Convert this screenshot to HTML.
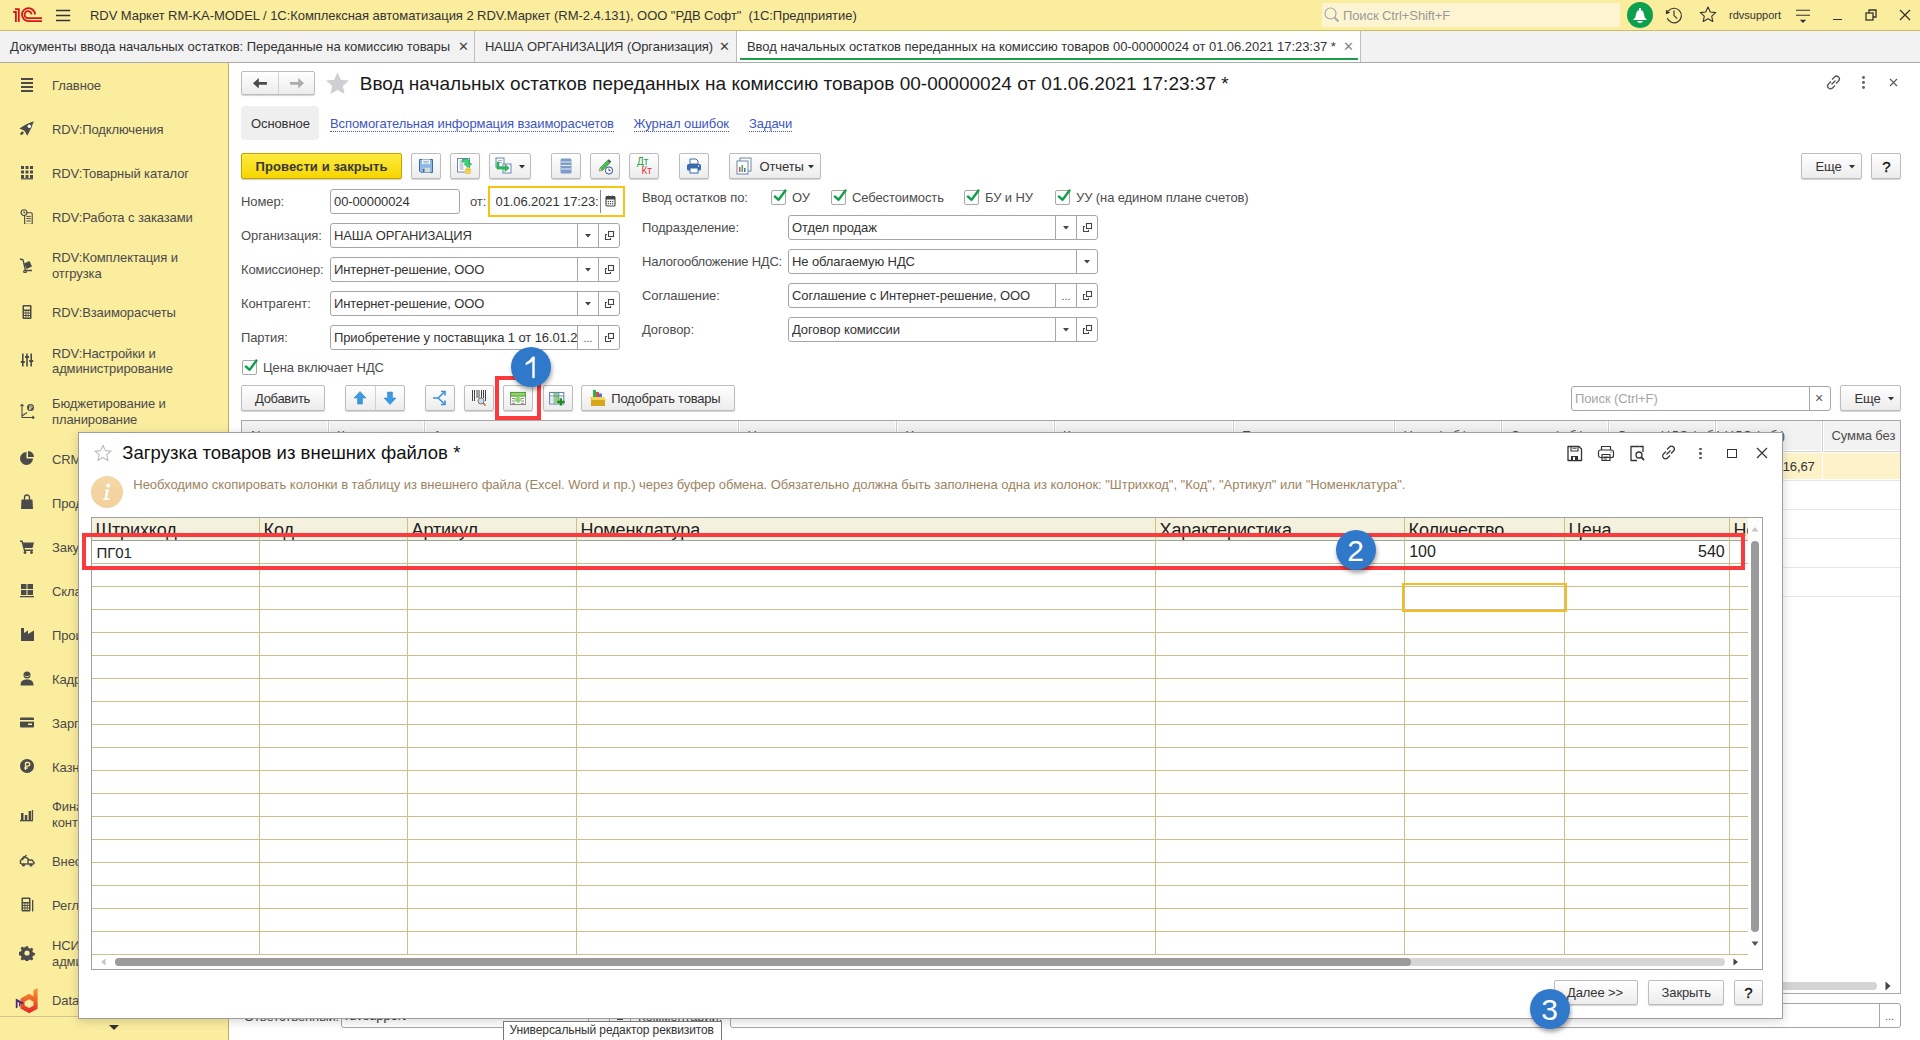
<!DOCTYPE html>
<html><head><meta charset="utf-8">
<style>
*{box-sizing:border-box;margin:0;padding:0}
html,body{width:1920px;height:1040px;overflow:hidden;background:#fff;font-family:"Liberation Sans",sans-serif;font-size:13px;color:#333}
.a{position:absolute}
.tx{position:absolute;white-space:nowrap;line-height:1;letter-spacing:-0.1px}
#top{left:0;top:0;width:1920px;height:31px;background:#FBED9E;border-bottom:1px solid #CDBB6A}
#tabs{left:0;top:31px;width:1920px;height:32px;background:#F2F2F2;border-bottom:1px solid #A9A9A9}
#side{left:0;top:63px;width:229px;height:977px;background:#FBED9E;border-right:1px solid #BFAF62}
.si{position:absolute;left:52px;font-size:13px;color:#4D4D4D;line-height:16px}
.ic{position:absolute}
.btn{position:absolute;border:1px solid #BDBDBD;border-radius:2px;background:linear-gradient(#FFFFFF,#ECECEC);box-shadow:0 1px 1px rgba(0,0,0,.18)}
.inp{position:absolute;border:1px solid #A6A6A6;border-radius:3px;background:#fff;height:25px}
.lbl{position:absolute;color:#4D4D4D;font-size:13px;white-space:nowrap;line-height:1}
.val{position:absolute;color:#333;font-size:13px;white-space:nowrap;line-height:1}
.sep{position:absolute;top:0;bottom:0;width:1px;background:#D0D0D0}
.link{position:absolute;color:#3E62B8;font-size:13px;white-space:nowrap;line-height:1;border-bottom:1px dotted #3E62B8;padding-bottom:1px}
.cb{position:absolute;width:15px;height:15px;border:1px solid #A8A8A8;border-radius:2px;background:#fff}
.dd{position:absolute;width:0;height:0;border-left:4px solid transparent;border-right:4px solid transparent;border-top:4px solid #444}
</style></head><body>
<!-- TOP BAR -->
<div id="top" class="a">
  <svg class="ic" style="left:0;top:0" width="48" height="31" viewBox="0 0 48 31"><g fill="none" stroke="#D7141A" stroke-width="1.8"><path d="M13.2 12 H15.9 V22"/><path d="M15 9.1 H18.8 V22"/><path d="M35 14.5 A6.5 6.5 0 1 0 28 21.1 H42"/><path d="M31.6 14.5 A3.5 3.5 0 1 0 28 18.1 H42"/></g></svg>
  <svg class="ic" style="left:0;top:0" width="80" height="31" viewBox="0 0 80 31"><g stroke="#333" stroke-width="1.3"><path d="M56 10.5H70.2M56 15.5H70.2M56 20.5H70.2"/></g></svg>
  <div class="tx" style="left:90px;top:9px;font-size:13px;color:#333;letter-spacing:-0.053px">RDV Маркет RM-KA-MODEL / 1С:Комплексная автоматизация 2 RDV.Маркет (RM-2.4.131), ООО "РДВ Софт"&nbsp; (1С:Предприятие)</div>
  <div class="a" style="left:1322px;top:3px;width:298px;height:24px;background:#FDF5D2;border-radius:2px"></div>
  <svg class="ic" style="left:1324px;top:7px" width="16" height="16" viewBox="0 0 16 16"><circle cx="6.5" cy="6.5" r="5.5" fill="none" stroke="#A8A8A8" stroke-width="1.2"/><path d="M10.5 10.5 L14.5 14.5" stroke="#A8A8A8" stroke-width="2"/></svg>
  <div class="tx" style="left:1343px;top:9px;font-size:13px;color:#9A9A9A">Поиск Ctrl+Shift+F</div>
  <div class="a" style="left:1627px;top:2px;width:26px;height:26px;border-radius:13px;background:#0BA04E"></div>
  <svg class="ic" style="left:1620px;top:0" width="40" height="31" viewBox="1620 0 40 31"><path d="M1639 7.9h2v2.1q2.4.5 2.8 3.6l.8 3.4q.5 1.6 2.6 2.9H1632.8q2.1-1.3 2.6-2.9l.8-3.4q.4-3.1 2.8-3.6z" fill="#fff"/><path d="M1637 21.1H1643Q1642 23.1 1640 23.1Q1638 23.1 1637 21.1z" fill="#fff"/></svg>
  <svg class="ic" style="left:1660px;top:0" width="30" height="31" viewBox="1660 0 30 31"><g fill="none" stroke="#333" stroke-width="1.15"><path d="M1668.2 11.2 A7.3 7.3 0 1 1 1667.3 18.2"/><path d="M1674 10.6 V15.6 L1677.2 18.7"/></g><path d="M1666 9.8 L1670.2 12.8 L1665.8 14.2z" fill="#333"/></svg>
  <svg class="ic" style="left:1699px;top:6px" width="18" height="18" viewBox="0 0 18 18"><path d="M9 1l2.3 5 5.4.6-4 3.6 1.1 5.3L9 12.8l-4.8 2.7 1.1-5.3-4-3.6 5.4-.6z" fill="none" stroke="#333" stroke-width="1.1" stroke-linejoin="round"/></svg>
  <div class="tx" style="left:1729px;top:10px;font-size:11px;color:#333;letter-spacing:0">rdvsupport</div>
  <svg class="ic" style="left:1790px;top:0" width="26" height="31" viewBox="1790 0 26 31"><g stroke="#333" stroke-width="1.1"><path d="M1796 10.3H1810M1796 15.3H1810"/></g><path d="M1799.8 19.8H1806.2L1803 23z" fill="#333"/></svg>
  <div class="a" style="left:1833px;top:19px;width:9px;height:1px;background:#333"></div>
  <svg class="ic" style="left:1865px;top:9px" width="12" height="12" viewBox="0 0 12 12"><g fill="none" stroke="#333" stroke-width="1.3"><rect x="1" y="4" width="7" height="7"/><path d="M4 4V1H11V8H8"/></g></svg>
  <svg class="ic" style="left:1899px;top:9px" width="12" height="12" viewBox="0 0 12 12"><path d="M1 1L11 11M11 1L1 11" stroke="#333" stroke-width="1.3"/></svg>
</div>
<!-- TABS -->
<div id="tabs" class="a">
  <div class="tx" style="left:10px;top:9px;color:#333;letter-spacing:-0.046px">Документы ввода начальных остатков: Переданные на комиссию товары</div>
  <div class="tx" style="left:458px;top:9px;color:#444;font-size:13px">✕</div>
  <div class="a" style="left:474px;top:0;width:1px;height:31px;background:#BDBDBD"></div>
  <div class="tx" style="left:485px;top:9px;color:#333;letter-spacing:-0.07px">НАША ОРГАНИЗАЦИЯ (Организация)</div>
  <div class="tx" style="left:719px;top:9px;color:#444">✕</div>
  <div class="a" style="left:736px;top:0;width:1px;height:31px;background:#BDBDBD"></div>
  <div class="a" style="left:737px;top:0;width:624px;height:31px;background:#fff"></div>
  <div class="tx" style="left:747px;top:9px;color:#333;letter-spacing:-0.05px">Ввод начальных остатков переданных на комиссию товаров 00-00000024 от 01.06.2021 17:23:37 *</div>
  <div class="tx" style="left:1343px;top:9px;color:#888">✕</div>
  <div class="a" style="left:740px;top:27px;width:618px;height:2px;background:#1E9E4A"></div>
  <div class="a" style="left:1360px;top:0;width:1px;height:31px;background:#BDBDBD"></div>
</div>

<!-- SIDEBAR -->
<div id="side" class="a"></div>
<div class="tx" style="left:52px;top:79.0px;color:#4A4A4A">Главное</div>
<svg class="ic" style="left:19px;top:76px" width="16" height="16" viewBox="0 0 16 16"><rect x="2" y="2" width="12" height="2" fill="#4A4A4A"/><rect x="2" y="6" width="12" height="2" fill="#4A4A4A"/><rect x="2" y="10" width="12" height="2" fill="#4A4A4A"/><rect x="2" y="14" width="12" height="2" fill="#4A4A4A"/></svg>
<div class="tx" style="left:52px;top:123.0px;color:#4A4A4A">RDV:Подключения</div>
<svg class="ic" style="left:19px;top:120px" width="16" height="16" viewBox="0 0 16 16"><path d="M14.8 1.2 Q8.5 3.2 0.4 8.4 L4.6 10.2 L5.9 11.6 L8.3 15.7 Q12.8 8 14.8 1.2z" fill="#4A4A4A"/><circle cx="10.3" cy="6.3" r="1.7" fill="#fff"/><path d="M3.2 11.2 L1.2 13.6 L1.8 15.2 L3.6 14.6 L5 12.6z" fill="#4A4A4A"/></svg>
<div class="tx" style="left:52px;top:166.5px;color:#4A4A4A">RDV:Товарный каталог</div>
<svg class="ic" style="left:19px;top:164px" width="16" height="16" viewBox="0 0 16 16"><g fill="#4A4A4A"><rect x="2" y="2" width="3" height="3"/><rect x="6.5" y="2" width="3" height="3"/><rect x="11" y="2" width="3" height="3"/><rect x="2" y="6.5" width="3" height="3"/><rect x="6.5" y="6.5" width="3" height="3"/><rect x="11" y="6.5" width="3" height="3"/><rect x="2" y="11" width="3" height="3"/><rect x="6.5" y="11" width="3" height="3"/><rect x="11" y="11" width="3" height="3"/><rect x="2" y="14.2" width="12" height="1.2"/></g></svg>
<div class="tx" style="left:52px;top:211.0px;color:#4A4A4A">RDV:Работа с заказами</div>
<svg class="ic" style="left:19px;top:208px" width="16" height="16" viewBox="0 0 16 16"><g fill="none" stroke="#4A4A4A" stroke-width="1.1"><circle cx="5" cy="4.6" r="2.9"/><path d="M5 3.3V4.8H6.2"/><path d="M7.9 4.7H12.2Q13.2 4.7 13.2 5.7V15.2Q13.2 16.2 12.2 16.2H6.6Q5.6 16.2 5.6 15.2V7.5"/></g><path d="M7.3 8.4H11.8M7.3 10.6H11.8M7.3 13H11.8" stroke="#4A4A4A" stroke-width="1"/></svg>
<div class="tx" style="left:52px;top:251.0px;color:#4A4A4A">RDV:Комплектация и</div>
<div class="tx" style="left:52px;top:267.0px;color:#4A4A4A">отгрузка</div>
<svg class="ic" style="left:19px;top:257px" width="16" height="16" viewBox="0 0 16 16"><g fill="none" stroke="#4A4A4A" stroke-width="1.3"><path d="M1 2L4 2.8 6.5 13.5H13"/><circle cx="6" cy="14.5" r="1.2"/></g><rect x="6" y="5" width="6" height="6" transform="rotate(-25 9 8)" fill="#4A4A4A"/></svg>
<div class="tx" style="left:52px;top:306.0px;color:#4A4A4A">RDV:Взаиморасчеты</div>
<svg class="ic" style="left:19px;top:304px" width="16" height="16" viewBox="0 0 16 16"><rect x="3.5" y="1" width="9" height="14" rx="1" fill="#4A4A4A"/><rect x="5" y="2.5" width="6" height="3" fill="#FBED9E"/><g fill="#FBED9E"><rect x="5" y="7" width="1.5" height="1.5"/><rect x="7.3" y="7" width="1.5" height="1.5"/><rect x="9.5" y="7" width="1.5" height="1.5"/><rect x="5" y="9.5" width="1.5" height="1.5"/><rect x="7.3" y="9.5" width="1.5" height="1.5"/><rect x="9.5" y="9.5" width="1.5" height="1.5"/><rect x="5" y="12" width="1.5" height="1.5"/><rect x="7.3" y="12" width="1.5" height="1.5"/><rect x="9.5" y="12" width="1.5" height="1.5"/></g></svg>
<div class="tx" style="left:52px;top:346.5px;color:#4A4A4A">RDV:Настройки и</div>
<div class="tx" style="left:52px;top:362.0px;color:#4A4A4A">администрирование</div>
<svg class="ic" style="left:19px;top:352px" width="16" height="16" viewBox="0 0 16 16"><g fill="#4A4A4A"><rect x="3" y="1.5" width="1.6" height="13"/><rect x="7.2" y="1.5" width="1.6" height="13"/><rect x="11.4" y="1.5" width="1.6" height="13"/><rect x="1.8" y="9" width="4" height="2"/><rect x="6" y="4" width="4" height="2"/><rect x="10.2" y="8" width="4" height="2"/></g></svg>
<div class="tx" style="left:52px;top:397.0px;color:#4A4A4A">Бюджетирование и</div>
<div class="tx" style="left:52px;top:413.0px;color:#4A4A4A">планирование</div>
<svg class="ic" style="left:19px;top:403px" width="16" height="16" viewBox="0 0 16 16"><g fill="none" stroke="#4A4A4A" stroke-width="1.1"><path d="M3 1.5V14.5H15"/><path d="M1.5 3L3 1.5 4.5 3M13.5 13L15 14.5 13.5 16"/><path d="M3 13L8 9.5"/></g><circle cx="11.5" cy="4.5" r="3.5" fill="#4A4A4A"/><path d="M10.8 2.8h1.5a1 1 0 0 1 0 2h-1.5M10.8 2.8V7M10 5.8h2.2" stroke="#FBED9E" stroke-width=".9" fill="none"/></svg>
<div class="tx" style="left:52px;top:452.5px;color:#4A4A4A">CRM и маркетинг</div>
<svg class="ic" style="left:19px;top:450px" width="16" height="16" viewBox="0 0 16 16"><path d="M7.5 2A6.5 6.5 0 1 0 14 8.5H7.5z" fill="#4A4A4A"/><path d="M9 1A6 6 0 0 1 15 7H9z" fill="#4A4A4A"/></svg>
<div class="tx" style="left:52px;top:496.5px;color:#4A4A4A">Продажи</div>
<svg class="ic" style="left:19px;top:494px" width="16" height="16" viewBox="0 0 16 16"><path d="M2.5 5.5H13.5L14 15H2z" fill="#4A4A4A"/><path d="M5.5 7V3.5A2.5 2.5 0 0 1 10.5 3.5V7" fill="none" stroke="#4A4A4A" stroke-width="1.3"/></svg>
<div class="tx" style="left:52px;top:540.5px;color:#4A4A4A">Закупки</div>
<svg class="ic" style="left:19px;top:538px" width="16" height="16" viewBox="0 0 16 16"><g fill="#4A4A4A"><path d="M1 2.5H3.5L4.2 4.5H15L13.5 10H5.5L6 11.5H14V13H5L2.5 4H1z"/><circle cx="6" cy="14.5" r="1.4"/><circle cx="12.5" cy="14.5" r="1.4"/></g></svg>
<div class="tx" style="left:52px;top:584.5px;color:#4A4A4A">Склад и доставка</div>
<svg class="ic" style="left:19px;top:582px" width="16" height="16" viewBox="0 0 16 16"><g fill="#4A4A4A"><rect x="2" y="2" width="5.5" height="5"/><rect x="8.5" y="2" width="5.5" height="5"/><rect x="2" y="8" width="5.5" height="5"/><rect x="8.5" y="8" width="5.5" height="5"/><rect x="1" y="14" width="14" height="1.3"/></g></svg>
<div class="tx" style="left:52px;top:628.5px;color:#4A4A4A">Производство</div>
<svg class="ic" style="left:19px;top:626px" width="16" height="16" viewBox="0 0 16 16"><path d="M2 15V2H5V7L9 4.5V8L15 4.5V15z" fill="#4A4A4A"/></svg>
<div class="tx" style="left:52px;top:672.5px;color:#4A4A4A">Кадры</div>
<svg class="ic" style="left:19px;top:670px" width="16" height="16" viewBox="0 0 16 16"><circle cx="8" cy="5" r="3.5" fill="#4A4A4A"/><path d="M1.5 15.5C1.5 11 4 9.5 8 9.5S14.5 11 14.5 15.5z" fill="#4A4A4A"/><path d="M5.5 5.5c1 1.5 4 1.5 5 0" stroke="#FBED9E" stroke-width=".8" fill="none"/></svg>
<div class="tx" style="left:52px;top:716.5px;color:#4A4A4A">Зарплата</div>
<svg class="ic" style="left:19px;top:714px" width="16" height="16" viewBox="0 0 16 16"><rect x="1" y="3.5" width="14" height="10" rx="1" fill="#4A4A4A"/><rect x="1" y="6" width="14" height="1.6" fill="#FBED9E"/><rect x="9" y="9.5" width="4" height="1.5" fill="#FBED9E"/></svg>
<div class="tx" style="left:52px;top:760.5px;color:#4A4A4A">Казначейство</div>
<svg class="ic" style="left:19px;top:758px" width="16" height="16" viewBox="0 0 16 16"><circle cx="8" cy="8" r="7" fill="#4A4A4A"/><path d="M6.5 4.5h2.5a1.8 1.8 0 0 1 0 3.6H6.5M6.5 4.5V12M5.2 10h3.5" stroke="#FBED9E" stroke-width="1.3" fill="none"/></svg>
<div class="tx" style="left:52px;top:800.0px;color:#4A4A4A">Финансовый результат и</div>
<div class="tx" style="left:52px;top:815.5px;color:#4A4A4A">контроллинг</div>
<svg class="ic" style="left:19px;top:806px" width="16" height="16" viewBox="0 0 16 16"><g fill="#4A4A4A"><rect x="2" y="7" width="2.5" height="7"/><rect x="5.8" y="9" width="2.5" height="5"/><rect x="9.6" y="5" width="2.5" height="9"/><rect x="1" y="14" width="13" height="1.3"/><rect x="12.8" y="4" width="1.3" height="10"/></g></svg>
<div class="tx" style="left:52px;top:855.0px;color:#4A4A4A">Внеоборотные активы</div>
<svg class="ic" style="left:19px;top:852px" width="16" height="16" viewBox="0 0 16 16"><g fill="none" stroke="#4A4A4A" stroke-width="1.4"><path d="M1.5 12V8.5L5 4.5 9 6.5V12"/><path d="M9 8H13L15 10.5V12"/><path d="M2 12H15"/></g><circle cx="4.5" cy="13" r="1.6" fill="#4A4A4A"/><circle cx="12" cy="13" r="1.6" fill="#4A4A4A"/><path d="M3 8L7.5 3" stroke="#4A4A4A" stroke-width="1.2"/></svg>
<div class="tx" style="left:52px;top:899.0px;color:#4A4A4A">Регламентированный учет</div>
<svg class="ic" style="left:19px;top:896px" width="16" height="16" viewBox="0 0 16 16"><rect x="2.5" y="1.5" width="9" height="14" rx="1" fill="#4A4A4A"/><rect x="4" y="3" width="6" height="3" fill="#FBED9E"/><g fill="#FBED9E"><rect x="4" y="7.5" width="1.5" height="1.4"/><rect x="6.3" y="7.5" width="1.5" height="1.4"/><rect x="8.5" y="7.5" width="1.5" height="1.4"/><rect x="4" y="10" width="1.5" height="1.4"/><rect x="6.3" y="10" width="1.5" height="1.4"/><rect x="8.5" y="10" width="1.5" height="1.4"/><rect x="4" y="12.5" width="1.5" height="1.4"/><rect x="6.3" y="12.5" width="1.5" height="1.4"/><rect x="8.5" y="12.5" width="1.5" height="1.4"/></g><rect x="13" y="4" width="1.3" height="11.5" fill="#4A4A4A"/></svg>
<div class="tx" style="left:52px;top:939.0px;color:#4A4A4A">НСИ и</div>
<div class="tx" style="left:52px;top:954.5px;color:#4A4A4A">администрирование</div>
<svg class="ic" style="left:19px;top:945px" width="16" height="16" viewBox="0 0 16 16"><path d="M6.8 1h2.4l.4 2 1.5.7 1.8-1.1 1.7 1.7-1.1 1.8.7 1.5 2 .4v2.4l-2 .4-.7 1.5 1.1 1.8-1.7 1.7-1.8-1.1-1.5.7-.4 2H6.8l-.4-2-1.5-.7-1.8 1.1-1.7-1.7 1.1-1.8-.7-1.5-2-.4V6.8l2-.4.7-1.5-1.1-1.8 1.7-1.7 1.8 1.1 1.5-.7z" fill="#4A4A4A" transform="translate(.2 .2) scale(.97)"/><circle cx="8" cy="8" r="2.6" fill="#FBED9E"/></svg>
<div class="tx" style="left:52px;top:994.0px;color:#4A4A4A">Data</div>
<svg class="ic" style="left:14px;top:986px" width="26" height="30" viewBox="14 986 26 30"><defs><linearGradient id="dg" x1="0" y1="0" x2="0" y2="1"><stop offset="0" stop-color="#F79A2A"/><stop offset="1" stop-color="#E2262A"/></linearGradient></defs><path fill-rule="evenodd" fill="url(#dg)" d="M20.5 998.5 L29.2 993.8 L33.4 996.2 V990.3 L37.6 988 V1008.8 L29.2 1013.2 L20.5 1008.5z M29.2 999.3 L24.6 1001.8 V1005.6 L29.2 1008.1 L33.5 1005.6 V1001.8z"/><path d="M15.8 998.6 L23.2 1002.4 V1004.6 L20.3 1003.2 V1006.2 L19 1006.6 V1002.6 L17.6 1001.9 V1007.6 L15.8 1008.4z" fill="#4B2A7A"/></svg>
<div class="a" style="left:0;top:1016px;width:228px;height:1px;background:#CFC48C"></div>
<div class="dd" style="left:109px;top:1025px;border-left-width:5px;border-right-width:5px;border-top-width:5px;border-top-color:#333"></div>
<!-- MAIN -->
<div class="btn" style="left:241px;top:71px;width:74px;height:24px;"></div>
<div class="a" style="left:278px;top:72px;width:1px;height:22px;background:#D0D0D0"></div>
<svg class="ic" style="left:252px;top:76px" width="16" height="14" viewBox="0 0 16 14"><path d="M1 7.3 L6.8 2 V5.9 H14.9 V8.7 H6.8 V12.6z" fill="#4A4A4A"/></svg>
<svg class="ic" style="left:289px;top:76px" width="16" height="14" viewBox="0 0 16 14"><path d="M15 7.3 L9.2 2 V5.9 H1.1 V8.7 H9.2 V12.6z" fill="#ABABAB"/></svg>
<svg class="ic" style="left:325px;top:71px" width="25" height="25" viewBox="0 0 25 25"><path d="M12.50 1.30 L15.79 8.77 L23.91 9.59 L17.83 15.03 L19.55 23.01 L12.50 18.90 L5.45 23.01 L7.17 15.03 L1.09 9.59 L9.21 8.77z" fill="#CDCFD2"/></svg>
<div class="tx" style="left:359.7px;top:73.92px;font-size:19px;color:#1A1A1A;letter-spacing:0.020px;">Ввод начальных остатков переданных на комиссию товаров 00-00000024 от 01.06.2021 17:23:37 *</div>
<svg class="ic" style="left:1825px;top:74px" width="17" height="17" viewBox="0 0 17 17"><g fill="none" stroke="#555" stroke-width="1.3"><path d="M7 5.5 L9.5 3 a2.8 2.8 0 0 1 4 4 L11 9.5"/><path d="M6 7.5 L3.5 10 a2.8 2.8 0 0 0 4 4 L10 11.5"/><path d="M6.5 10.5 L10.5 6.5"/></g></svg>
<div class="a" style="left:1861.8px;top:76.1px;width:2.8px;height:2.8px;border-radius:50%;background:#666"></div>
<div class="a" style="left:1861.8px;top:81.1px;width:2.8px;height:2.8px;border-radius:50%;background:#666"></div>
<div class="a" style="left:1861.8px;top:86.1px;width:2.8px;height:2.8px;border-radius:50%;background:#666"></div>
<svg class="ic" style="left:1889px;top:78px" width="9" height="9" viewBox="0 0 9 9"><path d="M1 1L8 8M8 1L1 8" stroke="#555" stroke-width="1.1"/></svg>
<div class="a" style="left:241px;top:106px;width:78px;height:34px;background:#EFEFEF;border-radius:4px"></div>
<div class="tx" style="left:251px;top:117.00px;font-size:13px;color:#333;">Основное</div>
<div class="tx" style="left:330px;top:116.50px;font-size:13px;color:#3C55C0;letter-spacing:-0.096px;border-bottom:1px dotted #3C55C0;padding-bottom:0;height:15px">Вспомогательная информация взаиморасчетов</div>
<div class="tx" style="left:633.5px;top:116.50px;font-size:13px;color:#3C55C0;letter-spacing:-0.065px;border-bottom:1px dotted #3C55C0;padding-bottom:0;height:15px">Журнал ошибок</div>
<div class="tx" style="left:749px;top:116.50px;font-size:13px;color:#3C55C0;letter-spacing:-0.076px;border-bottom:1px dotted #3C55C0;padding-bottom:0;height:15px">Задачи</div>
<div class="a" style="left:241px;top:153px;width:161px;height:26px;border:1px solid #C4A500;border-radius:2px;background:linear-gradient(#FFEB40,#F6D600);box-shadow:0 1px 1px rgba(0,0,0,.2)"></div>
<div class="tx" style="left:255.5px;top:159.70px;font-size:13px;color:#383838;letter-spacing:0.095px;font-weight:bold">Провести и закрыть</div>
<div class="btn" style="left:411px;top:153px;width:30px;height:26px;"></div>
<div class="btn" style="left:450px;top:153px;width:30px;height:26px;"></div>
<div class="btn" style="left:489px;top:153px;width:42px;height:26px;"></div>
<div class="btn" style="left:551px;top:153px;width:30px;height:26px;"></div>
<div class="btn" style="left:590px;top:153px;width:30px;height:26px;"></div>
<div class="btn" style="left:629px;top:153px;width:30px;height:26px;"></div>
<div class="btn" style="left:679px;top:153px;width:30px;height:26px;"></div>
<div class="btn" style="left:729px;top:153px;width:92px;height:26px;"></div>
<div class="btn" style="left:1801px;top:153px;width:61px;height:26px;"></div>
<div class="btn" style="left:1871px;top:153px;width:30px;height:26px;"></div>
<svg class="ic" style="left:418px;top:158px" width="16" height="16" viewBox="0 0 16 16"><path d="M1.5 1.5H14.5V14.5H3L1.5 13z" fill="#8CB6E8" stroke="#3C69AC" stroke-width="1"/><rect x="4" y="1.5" width="8" height="4.6" fill="#fff"/><path d="M5.2 3.3H10.8M5.2 4.9H10.8" stroke="#7098CA" stroke-width=".8"/><rect x="3.8" y="9.8" width="8.4" height="4.7" fill="#D3DBD8"/><rect x="4.6" y="10.6" width="1.9" height="3.6" fill="#3C69AC"/></svg>
<svg class="ic" style="left:456px;top:157px" width="18" height="19" viewBox="0 0 18 19"><rect x="1.5" y="1.5" width="12" height="13.5" fill="#fff" stroke="#7088A8" stroke-width="1"/><path d="M3.5 4H7M3.5 6H7M3.5 8H7.5M3.5 10H7.5M3.5 12H7.5" stroke="#8A9AB0" stroke-width=".9"/><path d="M6.5 2.2H10.5Q13.2 2.2 13.2 5V6.8H15.6L11.9 10.6 8.2 6.8H10.2V5.6Q10.2 5 9.6 5H6.5z" fill="#2DE07A" stroke="#13A04A" stroke-width=".8"/><ellipse cx="12" cy="12" rx="2.9" ry="1.3" fill="#F4DA5A"/><path d="M9.1 12V16.2Q12 18 14.9 16.2V12" fill="#E8C02A"/><path d="M9.3 13.6Q12 15 14.7 13.6M9.3 15.2Q12 16.6 14.7 15.2" stroke="#F8E890" stroke-width=".8" fill="none"/></svg>
<svg class="ic" style="left:495px;top:157px" width="19" height="18" viewBox="0 0 19 18"><rect x="1" y="1" width="8" height="9" fill="#fff" stroke="#6A85B0"/><rect x="8" y="7" width="8" height="9" fill="#fff" stroke="#6A85B0"/><path d="M3 3.5H7M3 5.5H7M10 10H14M10 12H14" stroke="#8FA3C2" stroke-width=".8"/><path d="M4 5 V10 H10 V7.5 L14 11 10 14.5 V12 H2 V5z" fill="#2CC35C" stroke="#169A46" stroke-width=".6"/></svg>
<svg class="ic" style="left:518.00px;top:164.30px" width="8.00" height="5.40"><path d="M1 1H7.00L4.00 4.40z" fill="#333"/></svg>
<svg class="ic" style="left:560px;top:158px" width="12" height="16" viewBox="0 0 12 16"><rect x=".5" y=".5" width="11" height="15" rx="1.5" fill="#7E9CC8"/><path d="M1 4H11M1 7.5H11M1 11H11" stroke="#E8EEF7" stroke-width="1"/></svg>
<svg class="ic" style="left:597px;top:158px" width="17" height="17" viewBox="0 0 17 17"><path d="M2 13 L3 10 L10.5 2.5 L13 5 L5.5 12.5z" fill="#4CBA5A" stroke="#2E7D3A" stroke-width=".6"/><path d="M10.5 2.5L11.8 1.2 14.3 3.7 13 5z" fill="#555"/><path d="M2 13L3 10 5.5 12.5z" fill="#E3B26A"/><circle cx="12" cy="12.5" r="3.6" fill="#fff" stroke="#2A4E8A" stroke-width="1"/><path d="M12 10.5V12.7H13.6" stroke="#2A4E8A" stroke-width="1" fill="none"/></svg>
<div class="tx" style="left:637px;top:157.03px;font-size:10px;color:#17A34A;">Дт</div>
<div class="tx" style="left:641.5px;top:166.03px;font-size:10px;color:#E3343A;">Кт</div>
<svg class="ic" style="left:686px;top:158px" width="16" height="16" viewBox="0 0 16 16"><path d="M4 1H10L12 3V6H4z" fill="#fff" stroke="#3A6AAE" stroke-width="1"/><rect x="1" y="6" width="14" height="6.5" rx="1.5" fill="#3A6AAE"/><rect x="4" y="10" width="8" height="5" fill="#fff" stroke="#3A6AAE" stroke-width="1"/><circle cx="12.5" cy="8" r=".7" fill="#fff"/></svg>
<svg class="ic" style="left:736px;top:157px" width="17" height="18" viewBox="0 0 17 18"><rect x="4" y="1" width="11" height="13" fill="#fff" stroke="#6F86A8" stroke-width="1"/><rect x="1" y="4" width="11" height="13" fill="#fff" stroke="#6F86A8" stroke-width="1"/><rect x="3" y="10" width="1.5" height="5" fill="#E04848"/><rect x="5.5" y="8" width="1.5" height="7" fill="#44B04A"/><rect x="8" y="11" width="1.5" height="4" fill="#3A75C4"/></svg>
<div class="tx" style="left:759.5px;top:160.00px;font-size:13px;color:#333;">Отчеты</div>
<svg class="ic" style="left:807.00px;top:164.30px" width="8.00" height="5.40"><path d="M1 1H7.00L4.00 4.40z" fill="#333"/></svg>
<div class="tx" style="left:1815.5px;top:160.00px;font-size:13px;color:#333;">Еще</div>
<svg class="ic" style="left:1848.00px;top:164.30px" width="8.00" height="5.40"><path d="M1 1H7.00L4.00 4.40z" fill="#333"/></svg>
<div class="tx" style="left:1882.3px;top:159.10px;font-size:15px;color:#111;-webkit-text-stroke:0.35px #111">?</div>
<div class="tx" style="left:241px;top:194.80px;font-size:13px;color:#4D4D4D;">Номер:</div>
<div class="inp" style="left:330px;top:189px;width:130px;height:25px"></div>
<div class="a" style="left:334px;top:189px;width:126px;height:25px;overflow:hidden"><div class="tx" style="left:0;top:6.0px;color:#333">00-00000024</div></div>
<div class="tx" style="left:470px;top:194.80px;font-size:13px;color:#4D4D4D;">от:</div>
<div class="a" style="left:488px;top:186px;width:137px;height:31px;border:2px solid #F7C30C;background:#fff"></div>
<div class="a" style="left:495.5px;top:186px;width:103px;height:31px;overflow:hidden"><div class="tx" style="left:0;top:8.50px;color:#333">01.06.2021 17:23:37</div></div>
<div class="a" style="left:600px;top:190px;width:1px;height:23px;background:#8A8A8A"></div>
<svg class="ic" style="left:605px;top:195px" width="11" height="12" viewBox="0 0 11 12"><rect x="1" y="1.5" width="9" height="9.5" rx="1" fill="none" stroke="#444" stroke-width="1.1"/><rect x="1" y="1.5" width="9" height="3" fill="#444"/><circle cx="3.5" cy="1.3" r=".8" fill="#444"/><circle cx="7.5" cy="1.3" r=".8" fill="#444"/><g fill="#444"><circle cx="3.3" cy="6.5" r=".7"/><circle cx="5.5" cy="6.5" r=".7"/><circle cx="7.7" cy="6.5" r=".7"/><circle cx="3.3" cy="8.7" r=".7"/><circle cx="5.5" cy="8.7" r=".7"/><circle cx="7.7" cy="8.7" r=".7"/></g></svg>
<div class="tx" style="left:642px;top:190.50px;font-size:13px;color:#4D4D4D;">Ввод остатков по:</div>
<div class="cb" style="left:771px;top:190px"></div>
<svg class="ic" style="left:772px;top:186px" width="16" height="17" viewBox="0 0 16 17"><path d="M2.2 9.8 L6.6 13.8 L14 3.8" fill="none" stroke="#0E9F48" stroke-width="2.4" stroke-linejoin="round"/></svg>
<div class="tx" style="left:792px;top:190.50px;font-size:13px;color:#4D4D4D;">ОУ</div>
<div class="cb" style="left:831px;top:190px"></div>
<svg class="ic" style="left:832px;top:186px" width="16" height="17" viewBox="0 0 16 17"><path d="M2.2 9.8 L6.6 13.8 L14 3.8" fill="none" stroke="#0E9F48" stroke-width="2.4" stroke-linejoin="round"/></svg>
<div class="tx" style="left:852px;top:190.50px;font-size:13px;color:#4D4D4D;">Себестоимость</div>
<div class="cb" style="left:964px;top:190px"></div>
<svg class="ic" style="left:965px;top:186px" width="16" height="17" viewBox="0 0 16 17"><path d="M2.2 9.8 L6.6 13.8 L14 3.8" fill="none" stroke="#0E9F48" stroke-width="2.4" stroke-linejoin="round"/></svg>
<div class="tx" style="left:985px;top:190.50px;font-size:13px;color:#4D4D4D;">БУ и НУ</div>
<div class="cb" style="left:1055px;top:190px"></div>
<svg class="ic" style="left:1056px;top:186px" width="16" height="17" viewBox="0 0 16 17"><path d="M2.2 9.8 L6.6 13.8 L14 3.8" fill="none" stroke="#0E9F48" stroke-width="2.4" stroke-linejoin="round"/></svg>
<div class="tx" style="left:1076px;top:190.50px;font-size:13px;color:#4D4D4D;">УУ (на едином плане счетов)</div>
<div class="tx" style="left:241px;top:229.00px;font-size:13px;color:#4D4D4D;">Организация:</div>
<div class="inp" style="left:330px;top:223px;width:290px;height:25px"></div>
<div class="a" style="left:334px;top:223px;width:243px;height:25px;overflow:hidden"><div class="tx" style="left:0;top:6.0px;color:#333">НАША ОРГАНИЗАЦИЯ</div></div>
<div class="a" style="left:598px;top:224px;width:1px;height:23px;background:#A6A6A6"></div>
<svg class="ic" style="left:601px;top:229px" width="14" height="14" viewBox="0 0 14 14"><g fill="none" stroke="#444" stroke-width="1.1"><path d="M6 5.5H4.5V10.5H9.5V9"/><rect x="7.5" y="2.5" width="5" height="5"/></g></svg>
<div class="a" style="left:577px;top:224px;width:1px;height:23px;background:#A6A6A6"></div>
<svg class="ic" style="left:583.50px;top:233.10px" width="8.00" height="5.40"><path d="M1 1H7.00L4.00 4.40z" fill="#444"/></svg>
<div class="tx" style="left:241px;top:263.00px;font-size:13px;color:#4D4D4D;">Комиссионер:</div>
<div class="inp" style="left:330px;top:257px;width:290px;height:25px"></div>
<div class="a" style="left:334px;top:257px;width:243px;height:25px;overflow:hidden"><div class="tx" style="left:0;top:6.0px;color:#333">Интернет-решение, ООО</div></div>
<div class="a" style="left:598px;top:258px;width:1px;height:23px;background:#A6A6A6"></div>
<svg class="ic" style="left:601px;top:263px" width="14" height="14" viewBox="0 0 14 14"><g fill="none" stroke="#444" stroke-width="1.1"><path d="M6 5.5H4.5V10.5H9.5V9"/><rect x="7.5" y="2.5" width="5" height="5"/></g></svg>
<div class="a" style="left:577px;top:258px;width:1px;height:23px;background:#A6A6A6"></div>
<svg class="ic" style="left:583.50px;top:267.10px" width="8.00" height="5.40"><path d="M1 1H7.00L4.00 4.40z" fill="#444"/></svg>
<div class="tx" style="left:241px;top:297.00px;font-size:13px;color:#4D4D4D;">Контрагент:</div>
<div class="inp" style="left:330px;top:291px;width:290px;height:25px"></div>
<div class="a" style="left:334px;top:291px;width:243px;height:25px;overflow:hidden"><div class="tx" style="left:0;top:6.0px;color:#333">Интернет-решение, ООО</div></div>
<div class="a" style="left:598px;top:292px;width:1px;height:23px;background:#A6A6A6"></div>
<svg class="ic" style="left:601px;top:297px" width="14" height="14" viewBox="0 0 14 14"><g fill="none" stroke="#444" stroke-width="1.1"><path d="M6 5.5H4.5V10.5H9.5V9"/><rect x="7.5" y="2.5" width="5" height="5"/></g></svg>
<div class="a" style="left:577px;top:292px;width:1px;height:23px;background:#A6A6A6"></div>
<svg class="ic" style="left:583.50px;top:301.10px" width="8.00" height="5.40"><path d="M1 1H7.00L4.00 4.40z" fill="#444"/></svg>
<div class="tx" style="left:241px;top:331.00px;font-size:13px;color:#4D4D4D;">Партия:</div>
<div class="inp" style="left:330px;top:325px;width:290px;height:25px"></div>
<div class="a" style="left:334px;top:325px;width:243px;height:25px;overflow:hidden"><div class="tx" style="left:0;top:6.0px;color:#333">Приобретение у поставщика 1 от 16.01.2021</div></div>
<div class="a" style="left:598px;top:326px;width:1px;height:23px;background:#A6A6A6"></div>
<svg class="ic" style="left:601px;top:331px" width="14" height="14" viewBox="0 0 14 14"><g fill="none" stroke="#444" stroke-width="1.1"><path d="M6 5.5H4.5V10.5H9.5V9"/><rect x="7.5" y="2.5" width="5" height="5"/></g></svg>
<div class="a" style="left:577px;top:326px;width:1px;height:23px;background:#A6A6A6"></div>
<div class="tx" style="left:583.5px;top:333.19px;font-size:11px;color:#555;">...</div>
<div class="tx" style="left:642px;top:221.30px;font-size:13px;color:#4D4D4D;">Подразделение:</div>
<div class="inp" style="left:788px;top:215px;width:310px;height:25px"></div>
<div class="a" style="left:792px;top:215px;width:263px;height:25px;overflow:hidden"><div class="tx" style="left:0;top:6.0px;color:#333">Отдел продаж</div></div>
<div class="a" style="left:1076px;top:216px;width:1px;height:23px;background:#A6A6A6"></div>
<svg class="ic" style="left:1079px;top:221px" width="14" height="14" viewBox="0 0 14 14"><g fill="none" stroke="#444" stroke-width="1.1"><path d="M6 5.5H4.5V10.5H9.5V9"/><rect x="7.5" y="2.5" width="5" height="5"/></g></svg>
<div class="a" style="left:1055px;top:216px;width:1px;height:23px;background:#A6A6A6"></div>
<svg class="ic" style="left:1061.50px;top:225.10px" width="8.00" height="5.40"><path d="M1 1H7.00L4.00 4.40z" fill="#444"/></svg>
<div class="tx" style="left:642px;top:255.30px;font-size:13px;color:#4D4D4D;letter-spacing:-0.230px;">Налогообложение НДС:</div>
<div class="inp" style="left:788px;top:249px;width:310px;height:25px"></div>
<div class="a" style="left:792px;top:249px;width:284px;height:25px;overflow:hidden"><div class="tx" style="left:0;top:6.0px;color:#333">Не облагаемую НДС</div></div>
<div class="a" style="left:1076px;top:250px;width:1px;height:23px;background:#A6A6A6"></div>
<svg class="ic" style="left:1082.50px;top:259.10px" width="8.00" height="5.40"><path d="M1 1H7.00L4.00 4.40z" fill="#444"/></svg>
<div class="tx" style="left:642px;top:289.30px;font-size:13px;color:#4D4D4D;">Соглашение:</div>
<div class="inp" style="left:788px;top:283px;width:310px;height:25px"></div>
<div class="a" style="left:792px;top:283px;width:263px;height:25px;overflow:hidden"><div class="tx" style="left:0;top:6.0px;color:#333">Соглашение с Интернет-решение, ООО</div></div>
<div class="a" style="left:1076px;top:284px;width:1px;height:23px;background:#A6A6A6"></div>
<svg class="ic" style="left:1079px;top:289px" width="14" height="14" viewBox="0 0 14 14"><g fill="none" stroke="#444" stroke-width="1.1"><path d="M6 5.5H4.5V10.5H9.5V9"/><rect x="7.5" y="2.5" width="5" height="5"/></g></svg>
<div class="a" style="left:1055px;top:284px;width:1px;height:23px;background:#A6A6A6"></div>
<div class="tx" style="left:1061.5px;top:291.19px;font-size:11px;color:#555;">...</div>
<div class="tx" style="left:642px;top:323.30px;font-size:13px;color:#4D4D4D;">Договор:</div>
<div class="inp" style="left:788px;top:317px;width:310px;height:25px"></div>
<div class="a" style="left:792px;top:317px;width:263px;height:25px;overflow:hidden"><div class="tx" style="left:0;top:6.0px;color:#333">Договор комиссии</div></div>
<div class="a" style="left:1076px;top:318px;width:1px;height:23px;background:#A6A6A6"></div>
<svg class="ic" style="left:1079px;top:323px" width="14" height="14" viewBox="0 0 14 14"><g fill="none" stroke="#444" stroke-width="1.1"><path d="M6 5.5H4.5V10.5H9.5V9"/><rect x="7.5" y="2.5" width="5" height="5"/></g></svg>
<div class="a" style="left:1055px;top:318px;width:1px;height:23px;background:#A6A6A6"></div>
<svg class="ic" style="left:1061.50px;top:327.10px" width="8.00" height="5.40"><path d="M1 1H7.00L4.00 4.40z" fill="#444"/></svg>
<div class="cb" style="left:242px;top:360px"></div>
<svg class="ic" style="left:243px;top:356px" width="16" height="17" viewBox="0 0 16 17"><path d="M2.2 9.8 L6.6 13.8 L14 3.8" fill="none" stroke="#0E9F48" stroke-width="2.4" stroke-linejoin="round"/></svg>
<div class="tx" style="left:263px;top:360.50px;font-size:13px;color:#4D4D4D;">Цена включает НДС</div>
<div class="btn" style="left:241px;top:385px;width:84px;height:26px;"></div>
<div class="tx" style="left:255px;top:391.80px;font-size:13px;color:#333;letter-spacing:-0.307px;">Добавить</div>
<div class="btn" style="left:345px;top:385px;width:60px;height:26px;"></div>
<div class="a" style="left:375px;top:386px;width:1px;height:24px;background:#D0D0D0"></div>
<svg class="ic" style="left:352px;top:390px" width="16" height="16" viewBox="0 0 16 16"><path d="M8 1.5L14 8H10.5V14H5.5V8H2z" fill="#3B9BE0" stroke="#2A7CC0" stroke-width=".5"/></svg>
<svg class="ic" style="left:382px;top:390px" width="16" height="16" viewBox="0 0 16 16"><path d="M8 14.5L14 8H10.5V2H5.5V8H2z" fill="#3B9BE0" stroke="#2A7CC0" stroke-width=".5"/></svg>
<div class="btn" style="left:425px;top:385px;width:30px;height:26px;"></div>
<div class="btn" style="left:464px;top:385px;width:30px;height:26px;"></div>
<div class="btn" style="left:503px;top:385px;width:30px;height:26px;"></div>
<div class="btn" style="left:543px;top:385px;width:30px;height:26px;"></div>
<svg class="ic" style="left:431px;top:389px" width="18" height="18" viewBox="0 0 18 18"><g fill="none" stroke="#3B8DDB" stroke-width="1.6"><path d="M2 9H7L13 3.5M7 9L13 14.5"/><path d="M10 2.5H14V6.5M10 15.5H14V11.5"/></g></svg>
<svg class="ic" style="left:471px;top:389px" width="17" height="18" viewBox="0 0 17 18"><g stroke="#444"><path d="M1.5 1V12M3.5 1V12M6 1V9M8 1V9M10.5 1V9M12.5 1V9M14.5 1V12" stroke-width="1"/></g><circle cx="10" cy="12" r="3" fill="#C8DDF2" stroke="#777" stroke-width="1"/><path d="M12 14L14.5 16.5" stroke="#B07030" stroke-width="1.6"/></svg>
<svg class="ic" style="left:510px;top:390px" width="16" height="16" viewBox="0 0 16 16"><rect x="0.6" y="2.5" width="15" height="12" fill="#fff" stroke="#8C8C84" stroke-width="1.1"/><rect x="0.6" y="2.5" width="15" height="3.6" fill="#8CD96A" stroke="#5C9A3C" stroke-width="1.1"/><path d="M2 8.5H5.5M2 11H5M2 13.3H5M10.5 8.5H14M11 11H14M11 13.3H14" stroke="#8C8C84" stroke-width="1"/><path d="M6.3 6H9.7V9.2H12.2L8 13.2 3.8 9.2H6.3z" fill="#86D566"/></svg>
<svg class="ic" style="left:549px;top:390px" width="18" height="17" viewBox="0 0 18 17"><rect x="0.6" y="2.5" width="14.2" height="11.5" fill="#fff" stroke="#6A88A8" stroke-width="1.1"/><rect x="5.5" y="3" width="4" height="10.5" fill="#8CD96A"/><path d="M5 2.5V14M9.8 2.5V14M0.6 6H14.8" stroke="#6A88A8" stroke-width="1"/><rect x="1.2" y="6.5" width="3.3" height="7" fill="#DDE8F4"/><path d="M11.9 8.2V15.6M8.2 11.9H15.6" stroke="#1C8C1C" stroke-width="2.3"/></svg>
<div class="btn" style="left:581px;top:385px;width:154px;height:26px;"></div>
<svg class="ic" style="left:589px;top:389px" width="18" height="18" viewBox="0 0 18 18"><rect x="4" y="1" width="3" height="8" fill="#29B34A"/><rect x="7" y="3" width="3" height="6" fill="#E0455A"/><rect x="10" y="4.5" width="3" height="5" fill="#3A7DD0"/><path d="M1 8H15L16 9.5V17H2V9.5z" fill="#E8B824"/><path d="M1 8L4 11H17L15 8z" fill="#F7D55A"/><path d="M2 11H16V17H2z" fill="#D9A81A"/></svg>
<div class="tx" style="left:611.3px;top:391.80px;font-size:13px;color:#333;letter-spacing:-0.231px;">Подобрать товары</div>
<div class="inp" style="left:1571px;top:386px;width:260px;height:25px"></div>
<div class="a" style="left:1575px;top:386px;width:234px;height:25px;overflow:hidden"><div class="tx" style="left:0;top:6.0px;color:#333"><span style="color:#A5A5A5">Поиск (Ctrl+F)</span></div></div>
<div class="a" style="left:1809px;top:387px;width:1px;height:23px;background:#A6A6A6"></div>
<div class="tx" style="left:1815px;top:391.15px;font-size:14px;color:#555;">×</div>
<div class="btn" style="left:1840px;top:385px;width:61px;height:26px;"></div>
<div class="tx" style="left:1854.5px;top:391.80px;font-size:13px;color:#333;">Еще</div>
<svg class="ic" style="left:1887.00px;top:396.30px" width="8.00" height="5.40"><path d="M1 1H7.00L4.00 4.40z" fill="#333"/></svg>
<div class="a" style="left:241px;top:420px;width:1660px;height:574px;border:1px solid #A8A8A8;background:#fff"></div>
<div class="a" style="left:242px;top:421px;width:1658px;height:29px;background:#F2F2F2"></div>
<div class="a" style="left:242px;top:451px;width:1658px;height:1px;background:#D2D2D2"></div>
<div class="tx" style="left:251px;top:428.50px;font-size:13px;color:#4D4D4D;">N</div>
<div class="a" style="left:327px;top:421px;width:3px;height:31px;background:#FFFFFF"></div>
<div class="a" style="left:328px;top:421px;width:1px;height:31px;background:#CFCFCF"></div>
<div class="tx" style="left:337px;top:428.50px;font-size:13px;color:#4D4D4D;">Код</div>
<div class="a" style="left:423px;top:421px;width:3px;height:31px;background:#FFFFFF"></div>
<div class="a" style="left:424px;top:421px;width:1px;height:31px;background:#CFCFCF"></div>
<div class="tx" style="left:433px;top:428.50px;font-size:13px;color:#4D4D4D;">Артикул</div>
<div class="a" style="left:737px;top:421px;width:3px;height:31px;background:#FFFFFF"></div>
<div class="a" style="left:738px;top:421px;width:1px;height:31px;background:#CFCFCF"></div>
<div class="tx" style="left:747.5px;top:428.50px;font-size:13px;color:#4D4D4D;">Номенклатура</div>
<div class="a" style="left:895px;top:421px;width:3px;height:31px;background:#FFFFFF"></div>
<div class="a" style="left:896px;top:421px;width:1px;height:31px;background:#CFCFCF"></div>
<div class="tx" style="left:905.5px;top:428.50px;font-size:13px;color:#4D4D4D;">Характеристика</div>
<div class="a" style="left:1053px;top:421px;width:3px;height:31px;background:#FFFFFF"></div>
<div class="a" style="left:1054px;top:421px;width:1px;height:31px;background:#CFCFCF"></div>
<div class="tx" style="left:1063px;top:428.50px;font-size:13px;color:#4D4D4D;">Количество</div>
<div class="a" style="left:1232px;top:421px;width:3px;height:31px;background:#FFFFFF"></div>
<div class="a" style="left:1233px;top:421px;width:1px;height:31px;background:#CFCFCF"></div>
<div class="tx" style="left:1242px;top:428.50px;font-size:13px;color:#4D4D4D;">Единица измерения</div>
<div class="a" style="left:1393px;top:421px;width:3px;height:31px;background:#FFFFFF"></div>
<div class="a" style="left:1394px;top:421px;width:1px;height:31px;background:#CFCFCF"></div>
<div class="tx" style="left:1403.5px;top:428.50px;font-size:13px;color:#4D4D4D;">Цена (в б.)</div>
<div class="a" style="left:1500px;top:421px;width:3px;height:31px;background:#FFFFFF"></div>
<div class="a" style="left:1501px;top:421px;width:1px;height:31px;background:#CFCFCF"></div>
<div class="tx" style="left:1510.5px;top:428.50px;font-size:13px;color:#4D4D4D;">Сумма (в б.)</div>
<div class="a" style="left:1607px;top:421px;width:3px;height:31px;background:#FFFFFF"></div>
<div class="a" style="left:1608px;top:421px;width:1px;height:31px;background:#CFCFCF"></div>
<div class="tx" style="left:1617px;top:428.50px;font-size:13px;color:#4D4D4D;">Сумма НДС (в б.)</div>
<div class="a" style="left:1714px;top:421px;width:3px;height:31px;background:#FFFFFF"></div>
<div class="a" style="left:1715px;top:421px;width:1px;height:31px;background:#CFCFCF"></div>
<div class="tx" style="left:1724.5px;top:428.50px;font-size:13px;color:#4D4D4D;">НДС (в б.)</div>
<div class="a" style="left:1821px;top:421px;width:3px;height:31px;background:#FFFFFF"></div>
<div class="a" style="left:1822px;top:421px;width:1px;height:31px;background:#CFCFCF"></div>
<div class="tx" style="left:1831.5px;top:428.50px;font-size:13px;color:#4D4D4D;">Сумма без</div>
<div class="a" style="left:242px;top:453px;width:1658px;height:26px;background:#FEF2C9"></div>
<div class="a" style="left:1822px;top:452px;width:1px;height:27px;background:#fff"></div>
<div class="tx" style="left:1776.5px;top:460.00px;font-size:13px;color:#333;">116,67</div>
<div class="a" style="left:242px;top:480px;width:1658px;height:1px;background:#E6E6E6"></div>
<div class="a" style="left:242px;top:509px;width:1658px;height:1px;background:#E6E6E6"></div>
<div class="a" style="left:242px;top:538px;width:1658px;height:1px;background:#E6E6E6"></div>
<div class="a" style="left:242px;top:567px;width:1658px;height:1px;background:#E6E6E6"></div>
<div class="a" style="left:242px;top:596px;width:1658px;height:1px;background:#E6E6E6"></div>
<div class="a" style="left:244px;top:982px;width:1633px;height:7.5px;border-radius:4px;background:#D4D4D4"></div>
<svg class="ic" style="left:1884px;top:980px" width="8" height="12" viewBox="0 0 8 12"><path d="M1.5 1.5L6.5 6 1.5 10.5z" fill="#444"/></svg>
<div class="tx" style="left:244px;top:1009.50px;font-size:13px;color:#4D4D4D;">Ответственный:</div>
<div class="inp" style="left:341px;top:1003px;width:290px;height:25px"></div>
<div class="a" style="left:345px;top:1003px;width:243px;height:25px;overflow:hidden"><div class="tx" style="left:0;top:6.0px;color:#333">rdvsupport</div></div>
<div class="a" style="left:609px;top:1004px;width:1px;height:23px;background:#A6A6A6"></div>
<svg class="ic" style="left:613px;top:1009px" width="14" height="14" viewBox="0 0 14 14"><g fill="none" stroke="#444" stroke-width="1.1"><path d="M6 5.5H4.5V10.5H9.5V9"/><rect x="7.5" y="2.5" width="5" height="5"/></g></svg>
<div class="a" style="left:588px;top:1004px;width:1px;height:23px;background:#A6A6A6"></div>
<svg class="ic" style="left:594.50px;top:1013.10px" width="8.00" height="5.40"><path d="M1 1H7.00L4.00 4.40z" fill="#444"/></svg>
<div class="tx" style="left:638px;top:1009.50px;font-size:13px;color:#4D4D4D;">Комментарий:</div>
<div class="inp" style="left:729.5px;top:1003px;width:1171px;height:25px"></div>
<div class="a" style="left:733.5px;top:1003px;width:1145.0px;height:25px;overflow:hidden"><div class="tx" style="left:0;top:6.0px;color:#333"></div></div>
<div class="a" style="left:1878.5px;top:1004px;width:1px;height:23px;background:#A6A6A6"></div>
<div class="tx" style="left:1885.0px;top:1011.19px;font-size:11px;color:#555;">...</div>
<!-- MODAL -->
<div class="a" style="left:78px;top:432px;width:1705px;height:587px;border:1px solid #9E9E9E;background:#fff;box-shadow:0 2px 10px rgba(0,0,0,.17)"></div>
<svg class="ic" style="left:94px;top:444px" width="18" height="18" viewBox="0 0 18 18"><path d="M9 1.2 L11.3 6.6 17 7.1 12.7 10.9 14 16.5 9 13.5 4 16.5 5.3 10.9 1 7.1 6.7 6.6z" fill="none" stroke="#BDBDBD" stroke-width="1.1" stroke-linejoin="round"/></svg>
<div class="tx" style="left:122.3px;top:444.34px;font-size:18.5px;color:#111;letter-spacing:0.020px;">Загрузка товаров из внешних файлов *</div>
<svg class="ic" style="left:1566px;top:445px" width="17" height="17" viewBox="0 0 17 17"><path d="M2 1.5H13L15.5 4V15.5H2z" fill="none" stroke="#333" stroke-width="1.3" stroke-linejoin="round"/><path d="M5 1.5V6H12V1.5" fill="none" stroke="#333" stroke-width="1.1"/><path d="M6.5 3.3H10.5" stroke="#333" stroke-width=".9"/><rect x="5" y="11" width="7" height="4.5" fill="#333"/><rect x="7" y="12" width="2" height="3" fill="#fff"/></svg>
<svg class="ic" style="left:1597px;top:445px" width="18" height="17" viewBox="0 0 18 17"><g fill="none" stroke="#333" stroke-width="1.2" stroke-linejoin="round"><path d="M4.5 5V1.5H13.5V5"/><rect x="1.5" y="5" width="15" height="7.5" rx="2"/><rect x="5" y="9.5" width="8" height="6"/></g><path d="M6.5 12H11.5M6.5 14H10" stroke="#333" stroke-width=".9"/><circle cx="14" cy="7" r=".6" fill="#333"/></svg>
<svg class="ic" style="left:1629px;top:445px" width="17" height="17" viewBox="0 0 17 17"><path d="M10.5 1.5H2V15.5H8" fill="none" stroke="#333" stroke-width="1.3"/><path d="M10.5 1.5H14V7" fill="none" stroke="#333" stroke-width="1.3"/><circle cx="10" cy="10" r="3" fill="none" stroke="#333" stroke-width="1.3"/><path d="M12.2 12.2L15 15" stroke="#333" stroke-width="1.8"/></svg>
<svg class="ic" style="left:1660px;top:444px" width="17" height="17" viewBox="0 0 17 17"><g fill="none" stroke="#333" stroke-width="1.2"><path d="M7 5.5 L9.5 3 a2.8 2.8 0 0 1 4 4 L11 9.5"/><path d="M6 7.5 L3.5 10 a2.8 2.8 0 0 0 4 4 L10 11.5"/><path d="M6.5 10.5 L10.5 6.5"/></g></svg>
<div class="a" style="left:1699.0px;top:447.6px;width:2.8px;height:2.8px;border-radius:50%;background:#555"></div>
<div class="a" style="left:1699.0px;top:452.1px;width:2.8px;height:2.8px;border-radius:50%;background:#555"></div>
<div class="a" style="left:1699.0px;top:456.6px;width:2.8px;height:2.8px;border-radius:50%;background:#555"></div>
<div class="a" style="left:1727px;top:449px;width:10px;height:9px;border:1.3px solid #333"></div>
<svg class="ic" style="left:1756px;top:447px" width="12" height="12" viewBox="0 0 12 12"><path d="M1 1L11 11M11 1L1 11" stroke="#333" stroke-width="1.2"/></svg>
<div class="a" style="left:91px;top:476px;width:32px;height:32px;border-radius:16px;background:linear-gradient(#F5D8A6,#F2D09C)"></div>
<svg class="ic" style="left:96px;top:481px" width="22" height="22" viewBox="0 0 22 22"><circle cx="12.2" cy="4.5" r="2" fill="#fff"/><path d="M9.5 8.5H13L11 17.5H14L13.5 19H7L7.5 17.5H8.5L10 10H9z" fill="#fff"/></svg>
<div class="tx" style="left:133.3px;top:477.50px;font-size:13px;color:#9C8462;letter-spacing:-0.026px;">Необходимо скопировать колонки в таблицу из внешнего файла (Excel. Word и пр.) через буфер обмена. Обязательно должна быть заполнена одна из колонок: "Штрихкод", "Код", "Артикул" или "Номенклатура".</div>
<div class="a" style="left:91px;top:517px;width:1672px;height:453px;border:1px solid #A0A0A0;background:#fff"></div>
<div class="a" style="left:92px;top:518px;width:1656px;height:22px;background:#F4F1DD;overflow:hidden">
<div class="tx" style="left:3.5px;top:2.96px;font-size:18px;color:#222;">Штрихкод</div>
<div class="tx" style="left:171.5px;top:2.96px;font-size:18px;color:#222;">Код</div>
<div class="tx" style="left:319.5px;top:2.96px;font-size:18px;color:#222;">Артикул</div>
<div class="tx" style="left:488.5px;top:2.96px;font-size:18px;color:#222;">Номенклатура</div>
<div class="tx" style="left:1067.5px;top:2.96px;font-size:18px;color:#222;">Характеристика</div>
<div class="tx" style="left:1316.5px;top:2.96px;font-size:18px;color:#222;">Количество</div>
<div class="tx" style="left:1476.5px;top:2.96px;font-size:18px;color:#222;">Цена</div>
<div class="tx" style="left:1641.5px;top:2.96px;font-size:18px;color:#222;">Номер</div>
</div>
<div class="a" style="left:92px;top:540px;width:1656px;height:1px;background:#A0A0A0"></div>
<div class="a" style="left:92px;top:563px;width:1656px;height:1px;background:#CBC088"></div>
<div class="a" style="left:92px;top:586px;width:1656px;height:1px;background:#CBC088"></div>
<div class="a" style="left:92px;top:609px;width:1656px;height:1px;background:#CBC088"></div>
<div class="a" style="left:92px;top:632px;width:1656px;height:1px;background:#CBC088"></div>
<div class="a" style="left:92px;top:655px;width:1656px;height:1px;background:#CBC088"></div>
<div class="a" style="left:92px;top:678px;width:1656px;height:1px;background:#CBC088"></div>
<div class="a" style="left:92px;top:701px;width:1656px;height:1px;background:#CBC088"></div>
<div class="a" style="left:92px;top:724px;width:1656px;height:1px;background:#CBC088"></div>
<div class="a" style="left:92px;top:747px;width:1656px;height:1px;background:#CBC088"></div>
<div class="a" style="left:92px;top:770px;width:1656px;height:1px;background:#CBC088"></div>
<div class="a" style="left:92px;top:793px;width:1656px;height:1px;background:#CBC088"></div>
<div class="a" style="left:92px;top:816px;width:1656px;height:1px;background:#CBC088"></div>
<div class="a" style="left:92px;top:839px;width:1656px;height:1px;background:#CBC088"></div>
<div class="a" style="left:92px;top:862px;width:1656px;height:1px;background:#CBC088"></div>
<div class="a" style="left:92px;top:885px;width:1656px;height:1px;background:#CBC088"></div>
<div class="a" style="left:92px;top:908px;width:1656px;height:1px;background:#CBC088"></div>
<div class="a" style="left:92px;top:931px;width:1656px;height:1px;background:#CBC088"></div>
<div class="a" style="left:92px;top:954px;width:1656px;height:1px;background:#CBC088"></div>
<div class="a" style="left:259px;top:518px;width:1px;height:437px;background:#CBC088"></div>
<div class="a" style="left:407px;top:518px;width:1px;height:437px;background:#CBC088"></div>
<div class="a" style="left:576px;top:518px;width:1px;height:437px;background:#CBC088"></div>
<div class="a" style="left:1155px;top:518px;width:1px;height:437px;background:#CBC088"></div>
<div class="a" style="left:1404px;top:518px;width:1px;height:437px;background:#CBC088"></div>
<div class="a" style="left:1564px;top:518px;width:1px;height:437px;background:#CBC088"></div>
<div class="a" style="left:1729px;top:518px;width:1px;height:437px;background:#CBC088"></div>
<div class="tx" style="left:96.5px;top:544.80px;font-size:15px;color:#222;">ПГ01</div>
<div class="tx" style="left:1409.3px;top:544.06px;font-size:16px;color:#222;">100</div>
<div class="tx" style="left:1698.1px;top:544.06px;font-size:16px;color:#222;">540</div>
<div class="a" style="left:1402px;top:583px;width:165px;height:29px;border:2px solid #F4BE22"></div>
<svg class="ic" style="left:1751px;top:526px" width="8" height="6" viewBox="0 0 8 6"><path d="M0.5 5.5L4 1 7.5 5.5z" fill="#C6C6C6"/></svg>
<div class="a" style="left:1751px;top:541px;width:8px;height:391px;border-radius:4px;background:#9B9B9B"></div>
<svg class="ic" style="left:1751px;top:941px" width="8" height="6" viewBox="0 0 8 6"><path d="M0.5 0.5L4 5 7.5 0.5z" fill="#555"/></svg>
<svg class="ic" style="left:100px;top:958px" width="6" height="8" viewBox="0 0 6 8"><path d="M5.5 0.5L1 4 5.5 7.5z" fill="#C6C6C6"/></svg>
<div class="a" style="left:115px;top:958.2px;width:1610px;height:7.6px;border-radius:4px;background:#D6D6D6"></div>
<div class="a" style="left:115px;top:958.2px;width:1296px;height:7.6px;border-radius:4px;background:#9B9B9B"></div>
<svg class="ic" style="left:1733px;top:958px" width="6" height="8" viewBox="0 0 6 8"><path d="M0.5 0.5L5 4 0.5 7.5z" fill="#444"/></svg>
<div class="btn" style="left:1553.5px;top:979.5px;width:84px;height:25.5px;"></div>
<div class="tx" style="left:1567px;top:986.00px;font-size:13px;color:#333;">Далее &gt;&gt;</div>
<div class="btn" style="left:1647.5px;top:979.5px;width:76px;height:25.5px;"></div>
<div class="tx" style="left:1661.5px;top:986.00px;font-size:13px;color:#333;">Закрыть</div>
<div class="btn" style="left:1733.5px;top:979.5px;width:29px;height:25.5px;"></div>
<div class="tx" style="left:1744.3px;top:984.80px;font-size:15px;color:#111;-webkit-text-stroke:0.35px #111">?</div>
<div class="a" style="left:494.5px;top:376px;width:46px;height:43.5px;border:4px solid #FC3A3E"></div>
<div class="a" style="left:81.5px;top:533px;width:1663.5px;height:37px;border:4px solid #FC3A3E"></div>
<div class="a" style="left:1402px;top:583px;width:165px;height:29px;border:2px solid #F4BE22"></div>
<div class="a" style="left:511px;top:347px;width:40px;height:40px;border-radius:20px;background:#3078CA;box-shadow:1px 3px 4px rgba(0,0,0,.35)"></div>
<svg class="ic" style="left:520px;top:350px" width="20" height="32" viewBox="0 0 20 32"><rect x="12.3" y="6.8" width="2.4" height="21.3" fill="#fff"/><path d="M12.3 6.8 H14.7 V9.2 Q11 13.2 5.7 15.3 V12.7 Q10.2 10.6 12.3 6.8z" fill="#fff"/></svg>
<div class="a" style="left:1336px;top:530px;width:40px;height:40px;border-radius:20px;background:#3078CA;box-shadow:1px 3px 4px rgba(0,0,0,.35)"></div>
<div class="tx" style="left:1347.15px;top:535.61px;font-size:30px;color:#fff;letter-spacing:0">2</div>
<div class="a" style="left:1530px;top:989px;width:40px;height:40px;border-radius:20px;background:#3078CA;box-shadow:1px 3px 4px rgba(0,0,0,.35)"></div>
<div class="tx" style="left:1541.15px;top:994.61px;font-size:30px;color:#fff;letter-spacing:0">3</div>
<div class="a" style="left:503px;top:1020.5px;width:219px;height:21px;border:1px solid #777;background:#fff"></div>
<div class="tx" style="left:509.5px;top:1024.34px;font-size:12px;color:#333;">Универсальный редактор реквизитов</div>
</body></html>
